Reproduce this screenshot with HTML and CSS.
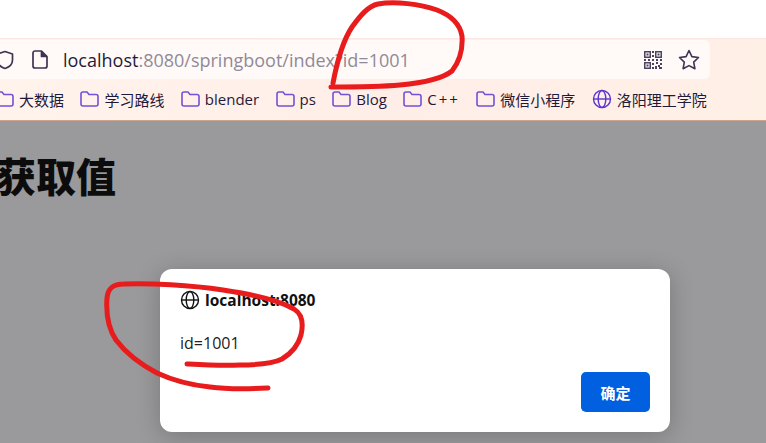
FILE: index.html
```html
<!DOCTYPE html>
<html lang="en">
<head>
    <meta charset="UTF-8">
    <meta name="viewport" content="width=device-width, initial-scale=1.0">
    <title>localhost:8080</title>
    <link rel="stylesheet" href="styles.css">
</head>
<body>

    <div class="tab-strip"></div>

    <div class="toolbar">
        <div class="url-bar">
            <svg class="icon-shield" width="18" height="20" viewBox="0 0 18 20" fill="none" stroke="#3c3554" stroke-width="1.7" stroke-linejoin="round">
                <path d="M9 1.5 16.5 4v6c0 4.300-3 7-7.500 8.500C4.500 17 1.500 14.300 1.500 10V4z"/>
            </svg>
            <svg class="icon-doc" width="16" height="19" viewBox="0 0 16 19" fill="none" stroke="#3c3554" stroke-width="1.7" stroke-linejoin="round">
                <path d="M3 1h6.500L15 6.500V16a2 2 0 0 1-2 2H3a2 2 0 0 1-2-2V3a2 2 0 0 1 2-2z"/>
                <path d="M9.500 1v5.500H15" fill="#3c3554"/>
            </svg>
            <div class="url-text"><span class="url-host">localhost</span>:8080/springboot/index?id=1001</div>
            <svg class="icon-qr" width="18" height="18" viewBox="0 0 18 18" fill="#4a4460">
                <path d="M0 0h7v7H0zM1.500 1.500v4h4v-4zM11 0h7v7h-7zM12.500 1.500v4h4v-4zM0 11h7v7H0zM1.500 12.500v4h4v-4z" fill-rule="evenodd"/>
                <path d="M2.500 2.500h2v2h-2zM13.500 2.500h2v2h-2zM2.500 13.500h2v2h-2z"/>
                <path d="M8 0h2v2H8zM8 4h2v2H8zM0 8h2v2H0zM4 8h2v2H4zM8 8h2v2H8zM12 8h2v2h-2zM16 8h2v2h-2zM8 12h2v2H8zM12 11h2v2h-2zM16 12h2v2h-2zM8 16h2v2H8zM11 15h2v3h-2zM15 16h3v2h-3zM14 14h2v2h-2z"/>
            </svg>
            <svg class="icon-star" width="22" height="21" viewBox="0 0 22 21" fill="none" stroke="#3c3554" stroke-width="1.6" stroke-linejoin="round">
                <path d="M11 1.500l2.900 6.100 6.600.9-4.800 4.600 1.200 6.600L11 16.600l-5.900 3.100 1.200-6.600L1.500 8.500l6.600-.9z"/>
            </svg>
        </div>

        <div class="bookmarks">
            <div class="bookmark"><svg class="folder" viewBox="0 0 19 16"><path d="M1 3a2 2 0 0 1 2-2h4l2 2.500h7a2 2 0 0 1 2 2V13a2 2 0 0 1-2 2H3a2 2 0 0 1-2-2z"/></svg>大数据</div>
            <div class="bookmark"><svg class="folder" viewBox="0 0 19 16"><path d="M1 3a2 2 0 0 1 2-2h4l2 2.500h7a2 2 0 0 1 2 2V13a2 2 0 0 1-2 2H3a2 2 0 0 1-2-2z"/></svg>学习路线</div>
            <div class="bookmark"><svg class="folder" viewBox="0 0 19 16"><path d="M1 3a2 2 0 0 1 2-2h4l2 2.500h7a2 2 0 0 1 2 2V13a2 2 0 0 1-2 2H3a2 2 0 0 1-2-2z"/></svg>blender</div>
            <div class="bookmark"><svg class="folder" viewBox="0 0 19 16"><path d="M1 3a2 2 0 0 1 2-2h4l2 2.500h7a2 2 0 0 1 2 2V13a2 2 0 0 1-2 2H3a2 2 0 0 1-2-2z"/></svg>ps</div>
            <div class="bookmark"><svg class="folder" viewBox="0 0 19 16"><path d="M1 3a2 2 0 0 1 2-2h4l2 2.500h7a2 2 0 0 1 2 2V13a2 2 0 0 1-2 2H3a2 2 0 0 1-2-2z"/></svg>Blog</div>
            <div class="bookmark bookmark-wide"><svg class="folder" viewBox="0 0 19 16"><path d="M1 3a2 2 0 0 1 2-2h4l2 2.500h7a2 2 0 0 1 2 2V13a2 2 0 0 1-2 2H3a2 2 0 0 1-2-2z"/></svg>C++</div>
            <div class="bookmark"><svg class="folder" viewBox="0 0 19 16"><path d="M1 3a2 2 0 0 1 2-2h4l2 2.500h7a2 2 0 0 1 2 2V13a2 2 0 0 1-2 2H3a2 2 0 0 1-2-2z"/></svg>微信小程序</div>
            <div class="bookmark"><svg class="globe globe-blue" viewBox="0 0 20 20"><circle cx="10" cy="10" r="8.500"/><ellipse cx="10" cy="10" rx="3.800" ry="8.500"/><path d="M1.500 10h17"/></svg>洛阳理工学院</div>
        </div>
    </div>

    <div class="page">
        <h1>获取值</h1>
    </div>

    <div class="dialog">
        <div class="dialog-title">
            <svg class="globe" viewBox="0 0 20 20"><circle cx="10" cy="10" r="8.500"/><ellipse cx="10" cy="10" rx="3.800" ry="8.500"/><path d="M1.500 10h17"/></svg>
            localhost:8080
        </div>
        <div class="dialog-message">id=1001</div>
        <div class="dialog-actions">
            <button type="button" class="ok-button">确定</button>
        </div>
    </div>

    <!-- red pen marks drawn over the screenshot -->
    <svg class="pen-marks" width="766" height="443" viewBox="0 0 766 443" fill="none">
        <path d="M333 83C337 62 342 42 352 27C360 16 368 6 378 4C395 1 420 4 437 10C450 15 460 24 462 36C463 50 459 62 452 71C442 79 422 83 400 85C378 87 352 87 331 87"/>
        <path d="M268 388C250 389 232 390 210 387C190 385 172 380 157 373C140 364 125 352 116 340C108 328 106 312 107 298C108 288 113 284 124 284C150 283 190 285 223 290C250 294 280 301 294 309C302 314 304 322 301 335C298 346 292 353 282 359C272 364 258 365 240 365C222 366 205 365 187 364"/>
    </svg>

</body>
</html>
```

FILE: styles.css
```css
* {
    margin: 0;
    padding: 0;
    box-sizing: border-box;
}

body {
    width: 766px;
    height: 443px;
    overflow: hidden;
    position: relative;
    background-color: #9a999b;
    color: #111;
    font-family: "Open Sans", "Noto Sans CJK SC", sans-serif;
}

.tab-strip {
    height: 38px;
    background-color: #fff;
}

.toolbar {
    height: 83px;
    padding-top: 2px;
    background: linear-gradient(90deg, #fff3ec, #ffeee8 50%, #fff0e6);
    border-top: 1px solid #fde6e2;
    border-bottom: 1px solid #c9a48e;
}

.url-bar {
    display: flex;
    align-items: center;
    width: 710px;
    height: 39px;
    margin-top: -1px;
    padding-right: 10px;
    background-color: #fffaf7;
    border-radius: 0 6px 6px 0;
}

.icon-shield {
    margin-left: -4px;
}

.icon-doc {
    margin-left: 18px;
}

.url-text {
    flex: 1;
    margin-left: 15px;
    font-size: 18px;
    color: #8f8a99;
}

.url-host {
    color: #1f1a3a;
}

.icon-star {
    margin-left: 16px;
}

.bookmarks {
    display: flex;
    align-items: center;
    height: 40px;
    margin-left: -5px;
    gap: 16.400px;
}

.bookmark {
    display: flex;
    align-items: center;
    gap: 5px;
    font-size: 15px;
    color: #1f1a3a;
    white-space: nowrap;
}

.bookmark-wide {
    letter-spacing: 2px;
}

.folder {
    width: 19px;
    height: 16px;
    fill: none;
    stroke: #7152d8;
    stroke-width: 1.600;
}

.globe {
    width: 20px;
    height: 20px;
    fill: none;
    stroke: #111;
    stroke-width: 1.400;
}

.globe-blue {
    stroke: #5a35d0;
}

.page {
    padding-top: 30px;
}

h1 {
    margin-left: -4px;
    font-size: 40px;
    line-height: 52px;
    font-weight: 900;
    color: #0c0c0c;
}

.dialog {
    position: absolute;
    left: 160px;
    top: 269px;
    width: 510px;
    height: 163px;
    padding: 20px;
    background-color: #fff;
    border-radius: 12px;
    box-shadow: 0 4px 24px rgba(0, 0, 0, 0.22);
}

.dialog-title {
    display: flex;
    align-items: center;
    gap: 5px;
    font-size: 15.500px;
    font-weight: 700;
    color: #111;
}

.dialog-message {
    margin-top: 21px;
    font-size: 16px;
    color: #222;
}

.dialog-actions {
    display: flex;
    justify-content: flex-end;
    margin-top: 18px;
}

.ok-button {
    width: 69px;
    height: 40px;
    border: none;
    border-radius: 5px;
    background-color: #0060df;
    color: #fff;
    font-family: inherit;
    font-size: 15px;
    font-weight: 700;
}

.pen-marks {
    position: absolute;
    left: 0;
    top: 0;
    stroke: #e81c1c;
    stroke-width: 5;
    stroke-linecap: round;
    stroke-linejoin: round;
}
```
